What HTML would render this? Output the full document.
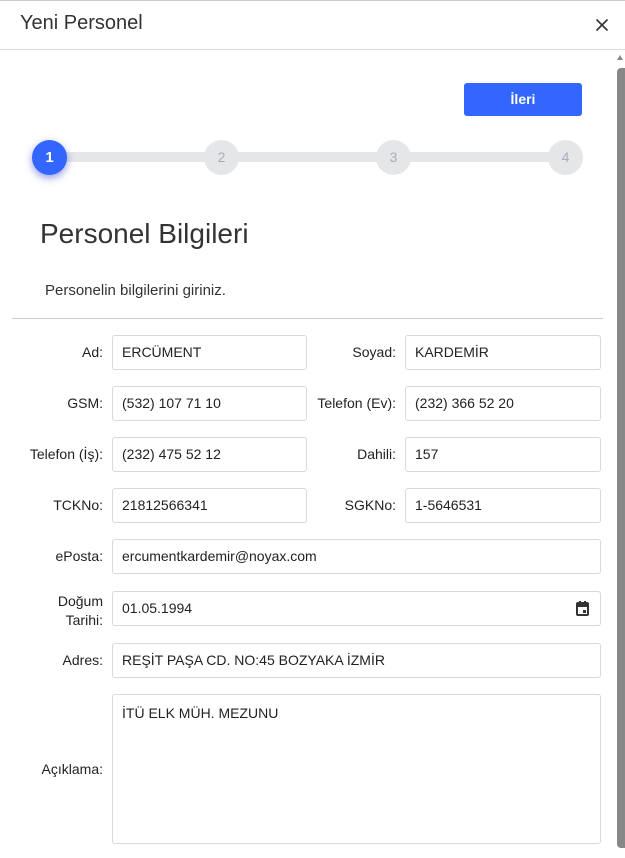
<!DOCTYPE html>
<html><head><meta charset="utf-8"><style>
*{box-sizing:border-box;margin:0;padding:0}
body{width:625px;height:858px;overflow:hidden;background:#fff;font-family:"Liberation Sans",sans-serif;color:#222;position:relative}
.a{position:absolute}
.in{position:absolute;height:35px;border:1px solid #d9d9d9;border-radius:3px;font-size:14px;line-height:33px;padding-left:9px;color:#222}
.lb{position:absolute;font-size:14px;text-align:right;color:#222;line-height:35px}
</style></head><body>
<div class="a" style="left:0;top:0;width:625px;height:1px;background:#ccc"></div>
<div class="a" style="left:20px;top:12px;font-size:20px;color:#333">Yeni Personel</div>
<svg class="a" style="left:595px;top:18px" width="14" height="14" viewBox="0 0 14 14"><path d="M1.5 1.5L12.5 12.5M12.5 1.5L1.5 12.5" stroke="#333" stroke-width="1.6"/></svg>
<div class="a" style="left:0;top:49px;width:625px;height:1px;background:#ddd"></div>
<div class="a" style="left:617px;top:55px;width:0;height:0;border-left:3px solid transparent;border-right:3px solid transparent;border-bottom:5px solid #888"></div>
<div class="a" style="left:617px;top:68px;width:8px;height:780px;background:#888;border-radius:4px 0 0 4px"></div>
<div class="a" style="left:464px;top:83px;width:118px;height:33px;background:#3366ff;border-radius:3px;color:#fff;font-size:14px;font-weight:bold;text-align:center;line-height:33px">İleri</div>
<div class="a" style="left:50px;top:152px;width:520px;height:10px;background:#e5e6e8"></div>
<div class="a" style="left:32px;top:140px;width:35px;height:35px;border-radius:50%;background:#3366ff;color:#fff;font-weight:bold;font-size:15px;text-align:center;line-height:35px;box-shadow:0 3px 8px rgba(40,60,200,.5)">1</div>
<div class="a" style="left:204px;top:140px;width:35px;height:35px;border-radius:50%;background:#e5e6e8;color:#aab;font-size:14px;text-align:center;line-height:35px">2</div>
<div class="a" style="left:376px;top:140px;width:35px;height:35px;border-radius:50%;background:#e5e6e8;color:#aab;font-size:14px;text-align:center;line-height:35px">3</div>
<div class="a" style="left:548px;top:140px;width:35px;height:35px;border-radius:50%;background:#e5e6e8;color:#aab;font-size:14px;text-align:center;line-height:35px">4</div>
<div class="a" style="left:40px;top:218px;font-size:28px;color:#333">Personel Bilgileri</div>
<div class="a" style="left:45px;top:282px;font-size:15px;color:#333">Personelin bilgilerini giriniz.</div>
<div class="a" style="left:12px;top:318px;width:591px;height:1px;background:#ccc"></div>

<div class="lb" style="left:0;width:103px;top:335px">Ad:</div><div class="in" style="left:112px;width:195px;top:335px">ERCÜMENT</div>
<div class="lb" style="left:300px;width:96px;top:335px">Soyad:</div><div class="in" style="left:405px;width:196px;top:335px">KARDEMİR</div>
<div class="lb" style="left:0;width:103px;top:386px">GSM:</div><div class="in" style="left:112px;width:195px;top:386px">(532) 107 71 10</div>
<div class="lb" style="left:300px;width:96px;top:386px">Telefon (Ev):</div><div class="in" style="left:405px;width:196px;top:386px">(232) 366 52 20</div>
<div class="lb" style="left:0;width:103px;top:437px">Telefon (İş):</div><div class="in" style="left:112px;width:195px;top:437px">(232) 475 52 12</div>
<div class="lb" style="left:300px;width:96px;top:437px">Dahili:</div><div class="in" style="left:405px;width:196px;top:437px">157</div>
<div class="lb" style="left:0;width:103px;top:488px">TCKNo:</div><div class="in" style="left:112px;width:195px;top:488px">21812566341</div>
<div class="lb" style="left:300px;width:96px;top:488px">SGKNo:</div><div class="in" style="left:405px;width:196px;top:488px">1-5646531</div>
<div class="lb" style="left:0;width:103px;top:539px">ePosta:</div><div class="in" style="left:112px;width:489px;top:539px">ercumentkardemir@noyax.com</div>
<div class="a" style="left:0;width:103px;top:592px;font-size:14px;text-align:right;line-height:19px">Doğum<br>Tarihi:</div>
<div class="in" style="left:112px;width:489px;top:591px">01.05.1994</div>
<svg class="a" style="left:576px;top:601px" width="13" height="15" viewBox="0 0 13 15"><rect x="1" y="2" width="11" height="12" rx="1" fill="none" stroke="#333" stroke-width="2"/><rect x="1" y="2" width="11" height="4" fill="#333"/><rect x="7" y="9" width="3" height="3" fill="#333"/><rect x="3" y="0" width="2" height="3" fill="#333"/><rect x="8" y="0" width="2" height="3" fill="#333"/></svg>
<div class="lb" style="left:0;width:103px;top:643px">Adres:</div><div class="in" style="left:112px;width:489px;top:643px">REŞİT PAŞA CD. NO:45 BOZYAKA İZMİR</div>
<div class="lb" style="left:0;width:103px;top:752px">Açıklama:</div>
<div class="in" style="left:112px;width:489px;top:694px;height:150px;line-height:20px;padding-top:8px">İTÜ ELK MÜH. MEZUNU</div>
</body></html>
